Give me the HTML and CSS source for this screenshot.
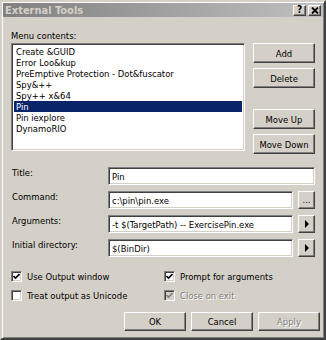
FILE: index.html
```html
<!DOCTYPE html>
<html lang="en">
<head>
    <meta charset="UTF-8">
    <title>External Tools</title>
    <link rel="stylesheet" href="styles.css">
</head>
<body>

<div class="window">
    <div class="caption">
        <span class="caption-text">External Tools</span>
        <div class="caption-buttons">
            <span class="cap-btn">?</span>
            <span class="cap-btn">
                <svg width="8" height="7" viewBox="0 0 8 7"><path d="M1 0.5 L7 6.5 M7 0.5 L1 6.5" stroke="#000" stroke-width="1.8"/></svg>
            </span>
        </div>
    </div>

    <div class="content">
        <div class="menu-label">Menu contents:</div>
        <div class="menu-row">
            <ul class="listbox">
                <li>Create &amp;GUID</li>
                <li>Error Loo&amp;kup</li>
                <li>PreEmptive Protection - Dot&amp;fuscator</li>
                <li>Spy&amp;++</li>
                <li>Spy++ x&amp;64</li>
                <li class="selected">Pin</li>
                <li>Pin iexplore</li>
                <li>DynamoRIO</li>
            </ul>
            <div class="side-buttons">
                <button class="btn">Add</button>
                <button class="btn">Delete</button>
                <button class="btn move-up">Move Up</button>
                <button class="btn">Move Down</button>
            </div>
        </div>

        <div class="fields">
            <label for="title">Title:</label>
            <div class="field"><input class="textbox" id="title" type="text" value="Pin"></div>

            <label for="cmd">Command:</label>
            <div class="field">
                <input class="textbox" id="cmd" type="text" value="c:\pin\pin.exe">
                <button class="btn mini">...</button>
            </div>

            <label for="args">Arguments:</label>
            <div class="field">
                <input class="textbox" id="args" type="text" value="-t $(TargetPath) -- ExercisePin.exe">
                <button class="btn mini"><span class="arrow"></span></button>
            </div>

            <label for="dir">Initial directory:</label>
            <div class="field">
                <input class="textbox" id="dir" type="text" value="$(BinDir)">
                <button class="btn mini"><span class="arrow"></span></button>
            </div>
        </div>

        <div class="checks">
            <div class="check"><span class="box"><svg width="7" height="7" viewBox="0 0 7 7"><polyline points="0.5,3 2.5,5 6.5,1" fill="none" stroke="#000" stroke-width="1.6"/></svg></span>Use Output window</div>
            <div class="check"><span class="box"><svg width="7" height="7" viewBox="0 0 7 7"><polyline points="0.5,3 2.5,5 6.5,1" fill="none" stroke="#000" stroke-width="1.6"/></svg></span>Prompt for arguments</div>
            <div class="check"><span class="box"></span>Treat output as Unicode</div>
            <div class="check disabled"><span class="box"><svg width="7" height="7" viewBox="0 0 7 7"><polyline points="0.5,3 2.5,5 6.5,1" fill="none" stroke="#808080" stroke-width="1.6"/></svg></span>Close on exit</div>
        </div>

        <div class="dialog-buttons">
            <button class="btn">OK</button>
            <button class="btn">Cancel</button>
            <button class="btn disabled">Apply</button>
        </div>
    </div>
</div>

</body>
</html>
```

FILE: styles.css
```css
body {
    margin: 0;
    padding: 0;
    background: #d4d0c8;
    font-family: 'DejaVu Sans Condensed', 'DejaVu Sans', sans-serif;
    font-size: 9.4px;
    color: #000;
}

.window {
    width: 326px;
    height: 340px;
    box-sizing: border-box;
    background: #d4d0c8;
    border: 2px solid;
    border-color: #d4d0c8 #404040 #404040 #d4d0c8;
    box-shadow: inset 1px 1px #fff, inset -1px -1px #808080;
    padding: 1px;
}

.caption {
    height: 14px;
    display: flex;
    align-items: center;
    justify-content: space-between;
    background: linear-gradient(to right, #808080, #c0c0c0);
    padding: 0 2px;
}

.caption-text {
    color: #d4d0c8;
    font-weight: bold;
    font-size: 11px;
}

.caption-buttons {
    display: flex;
    gap: 2px;
}

.cap-btn {
    width: 13px;
    height: 11px;
    box-sizing: border-box;
    display: flex;
    align-items: center;
    justify-content: center;
    font-weight: bold;
    font-size: 10px;
    line-height: 1;
    background: #d4d0c8;
    border: 1px solid;
    border-color: #fff #404040 #404040 #fff;
    box-shadow: inset -1px -1px #808080;
}

.content {
    padding: 0 8px;
}

.menu-label {
    margin-top: 13px;
    line-height: 12px;
}

.menu-row {
    display: flex;
    gap: 8px;
    margin-top: 1px;
}

.listbox {
    list-style: none;
    margin: 0;
    padding: 2px 0 0 0;
    width: 234px;
    height: 108px;
    box-sizing: border-box;
    background: #fff;
    border: 1px solid;
    border-color: #808080 #fff #fff #808080;
    box-shadow: inset 1px 1px #404040, inset -1px -1px #d4d0c8;
}

.listbox li {
    height: 11px;
    line-height: 11px;
    padding-left: 2px;
    margin: 0 2px;
    white-space: nowrap;
}

.listbox li.selected {
    background: #0a246a;
    color: #fff;
}

.side-buttons {
    display: flex;
    flex-direction: column;
    gap: 5px;
}

.btn {
    font: inherit;
    color: #000;
    width: 62px;
    height: 20px;
    padding: 0;
    box-sizing: border-box;
    background: #d4d0c8;
    border: 1px solid;
    border-color: #fff #404040 #404040 #fff;
    box-shadow: inset -1px -1px #808080;
}

.btn.move-up {
    margin-top: 16px;
}

.fields {
    display: grid;
    grid-template-columns: 97px 1fr;
    row-gap: 6px;
    margin-top: 13px;
}

.fields label {
    line-height: 12px;
    padding-left: 1px;
}

.field {
    display: flex;
    gap: 5px;
}

.textbox {
    flex: 1;
    min-width: 0;
    height: 18px;
    box-sizing: border-box;
    font: inherit;
    padding: 0 3px;
    background: #fff;
    border: 1px solid;
    border-color: #808080 #fff #fff #808080;
    box-shadow: inset 1px 1px #404040, inset -1px -1px #d4d0c8;
    outline: none;
}

.btn.mini {
    width: 17px;
    height: 18px;
    display: flex;
    align-items: center;
    justify-content: center;
    line-height: 1;
}

.arrow {
    width: 0;
    height: 0;
    border-left: 4px solid #000;
    border-top: 4px solid transparent;
    border-bottom: 4px solid transparent;
}

.checks {
    display: grid;
    grid-template-columns: 153px 1fr;
    row-gap: 7px;
    margin-top: 13px;
}

.check {
    display: flex;
    align-items: center;
    gap: 5px;
    height: 12px;
    white-space: nowrap;
}

.box {
    width: 11px;
    height: 11px;
    box-sizing: border-box;
    display: flex;
    align-items: center;
    justify-content: center;
    background: #fff;
    border: 1px solid;
    border-color: #808080 #fff #fff #808080;
    box-shadow: inset 1px 1px #404040, inset -1px -1px #d4d0c8;
}

.check.disabled {
    color: #808080;
    text-shadow: 1px 1px #fff;
}

.check.disabled .box {
    background: #d4d0c8;
}

.dialog-buttons {
    display: flex;
    justify-content: flex-end;
    gap: 5px;
    margin-top: 11px;
    margin-right: -5px;
}

.dialog-buttons .btn {
    height: 19px;
}

.btn.disabled {
    color: #808080;
    text-shadow: 1px 1px #fff;
}
```
